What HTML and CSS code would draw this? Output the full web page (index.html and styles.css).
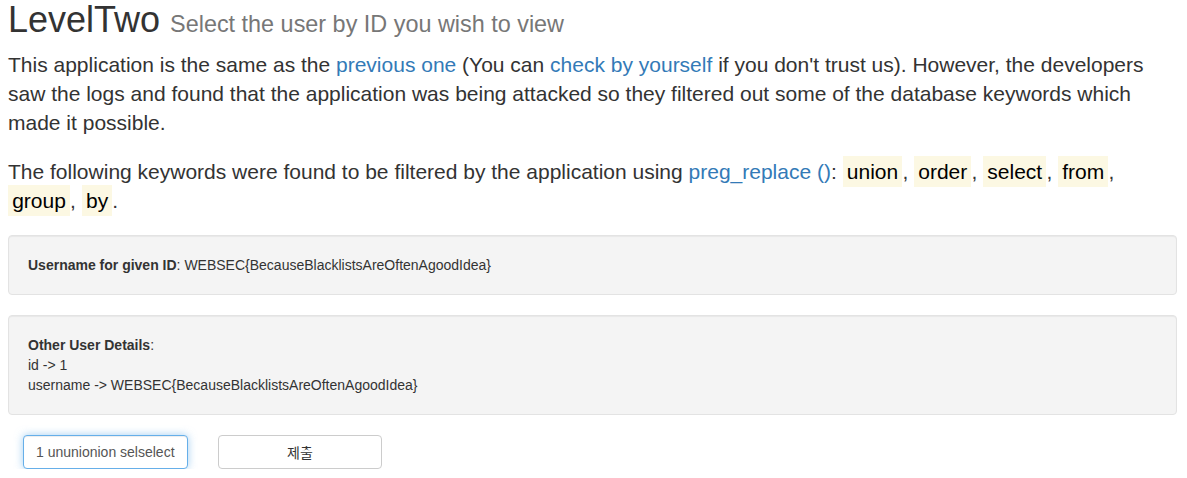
FILE: index.html
```html
<!DOCTYPE html>
<html lang="en">
<head>
  <meta charset="UTF-8">
  <title>LevelTwo</title>
  <link rel="stylesheet" href="styles.css">
</head>
<body>
  <div class="container">
    <h1>LevelTwo <small>Select the user by ID you wish to view</small></h1>
    <p class="lead">This application is the same as the <a href="#">previous one</a> (You can <a href="#">check by yourself</a> if you don't trust us). However, the developers saw the logs and found that the application was being attacked so they filtered out some of the database keywords which made it possible.</p>
    <p class="lead">The following keywords were found to be filtered by the application using <a href="#">preg_replace ()</a>: <mark>union</mark>, <mark>order</mark>, <mark>select</mark>, <mark>from</mark>, <mark>group</mark>, <mark>by</mark>.</p>

    <div class="well">
      <b>Username for given ID</b>: WEBSEC{BecauseBlacklistsAreOftenAgoodIdea}
    </div>
    <div class="well">
      <b>Other User Details</b>:<br>
      id -&gt; 1<br>
      username -&gt; WEBSEC{BecauseBlacklistsAreOftenAgoodIdea}
    </div>

    <form class="lookup" onsubmit="return false">
      <input type="text" class="form-control focus" value="1 ununionion selselect">
      <button type="submit" class="btn">제출</button>
    </form>
  </div>
</body>
</html>
```

FILE: styles.css
```css
body {
  margin: 0;
  font-family: "Liberation Sans", Arial, sans-serif;
  font-size: 14px;
  line-height: 1.42857;
  color: #333;
  background: #fff;
}
.container {
  padding: 0 10px 0 8px;
}
h1 {
  margin: 0 0 10px;
  font-size: 36px;
  font-weight: 500;
  line-height: 1.1;
}
h1 small {
  font-size: 65%;
  font-weight: normal;
  color: #777;
}
a {
  color: #337ab7;
  text-decoration: none;
}
.lead {
  margin: 0 0 19px;
  font-size: 21px;
  font-weight: 300;
  line-height: 1.4;
}
mark {
  padding: .2em;
  background: #fcf8e3;
  color: #000;
}
.well {
  min-height: 20px;
  padding: 19px;
  margin-bottom: 20px;
  font-size: 14px;
  line-height: 20px;
  background: #f4f4f4;
  border: 1px solid #e3e3e3;
  border-radius: 4px;
  box-shadow: inset 0 1px 1px rgba(0, 0, 0, .05);
}
.lookup {
  display: flex;
  gap: 30px;
  padding-left: 15px;
  margin-top: 20px;
}
.form-control {
  box-sizing: border-box;
  width: 165px;
  height: 34px;
  padding: 6px 12px;
  font-family: inherit;
  font-size: 14px;
  color: #555;
  background: #fff;
  border: 1px solid #ccc;
  border-radius: 4px;
  outline: none;
}
.form-control.focus {
  border-color: #66afe9;
  box-shadow: inset 0 1px 1px rgba(0, 0, 0, .075), 0 0 8px rgba(102, 175, 233, .6);
}
.btn {
  box-sizing: border-box;
  width: 164px;
  height: 34px;
  font-family: "Liberation Sans", "Noto Sans CJK KR", sans-serif;
  font-size: 14px;
  color: #333;
  background: #fff;
  border: 1px solid #ccc;
  border-radius: 4px;
  cursor: pointer;
}
```
